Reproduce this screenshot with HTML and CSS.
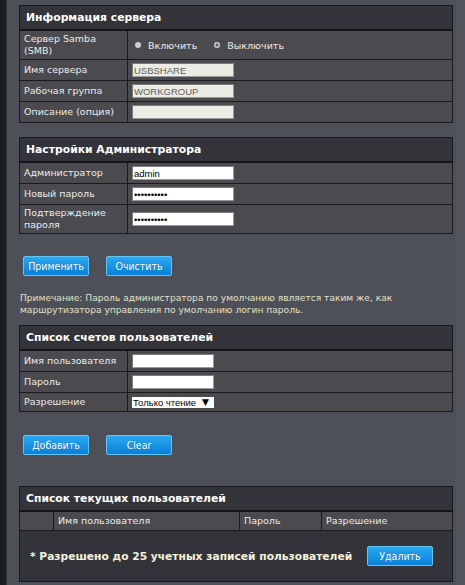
FILE: index.html
```html
<!DOCTYPE html>
<html lang="ru">
<head>
<meta charset="utf-8">
<title>Samba</title>
<link rel="stylesheet" href="styles.css">
</head>
<body>
<div class="page">
  <div class="edge-left"></div>
  <main class="content">
    <table class="panel">
      <colgroup><col class="col-label"><col></colgroup>
      <tr><th colspan="2" class="panel-title">Информация сервера</th></tr>
      <tr>
        <td class="label two">Сервер Samba (SMB)</td>
        <td class="value">
          <span class="radios">
            <label class="radio"><span class="dot"></span>Включить</label>
            <label class="radio"><span class="dot on"></span>Выключить</label>
          </span>
        </td>
      </tr>
      <tr><td class="label">Имя сервера</td><td class="value"><input class="field disabled" type="text" value="USBSHARE" disabled></td></tr>
      <tr><td class="label">Рабочая группа</td><td class="value"><input class="field disabled" type="text" value="WORKGROUP" disabled></td></tr>
      <tr><td class="label">Описание (опция)</td><td class="value"><input class="field disabled" type="text" value="" disabled></td></tr>
    </table>

    <table class="panel gap-top">
      <colgroup><col class="col-label"><col></colgroup>
      <tr><th colspan="2" class="panel-title">Настройки Администратора</th></tr>
      <tr><td class="label">Администратор</td><td class="value"><input class="field" type="text" value="admin"></td></tr>
      <tr><td class="label">Новый пароль</td><td class="value"><input class="field" type="password" value="1234567890"></td></tr>
      <tr><td class="label two">Подтверждение пароля</td><td class="value"><input class="field" type="password" value="1234567890"></td></tr>
    </table>

    <div class="actions">
      <button class="btn" type="button">Применить</button>
      <button class="btn" type="button">Очистить</button>
    </div>

    <p class="note">Примечание: Пароль администратора по умолчанию является таким же, как маршрутизатора управления по умолчанию логин пароль.</p>

    <table class="panel">
      <colgroup><col class="col-label"><col></colgroup>
      <tr><th colspan="2" class="panel-title">Список счетов пользователей</th></tr>
      <tr><td class="label">Имя пользователя</td><td class="value"><input class="field short" type="text" value=""></td></tr>
      <tr><td class="label">Пароль</td><td class="value"><input class="field short" type="password" value=""></td></tr>
      <tr><td class="label tight">Разрешение</td><td class="value"><div class="select"><span>Только чтение</span><span class="arrow">▼</span></div></td></tr>
    </table>

    <div class="actions actions-2">
      <button class="btn" type="button">Добавить</button>
      <button class="btn" type="button">Clear</button>
    </div>

    <table class="panel users">
      <colgroup><col class="c1"><col class="c2"><col class="c3"><col></colgroup>
      <tr><th colspan="4" class="panel-title">Список текущих пользователей</th></tr>
      <tr class="colhead"><td></td><td>Имя пользователя</td><td>Пароль</td><td>Разрешение</td></tr>
      <tr>
        <td colspan="4" class="users-body">
          <div class="users-row">
            <span class="limit">* Разрешено до 25 учетных записей пользователей</span>
            <button class="btn" type="button">Удалить</button>
          </div>
        </td>
      </tr>
    </table>
  </main>
  <div class="edge-right"></div>
</div>
</body>
</html>
```

FILE: styles.css
```css
html, body {
  margin: 0;
  padding: 0;
}

body {
  background: #4d5058;
  font-family: "DejaVu Sans", sans-serif;
  color: #ececec;
}

.page {
  display: flex;
  min-height: 585px;
}

.edge-left {
  flex: none;
  width: 7px;
  background: linear-gradient(to right, #1c1d20 0, #1c1d20 5px, #34363b 7px);
}

.edge-right {
  flex: none;
  width: 8px;
  background: #53565e;
  border-left: 1px solid #5a5d65;
  box-sizing: border-box;
}

.content {
  flex: 1;
  padding: 5px 4px 0 12px;
  min-width: 0;
}

.panel {
  width: 100%;
  border-collapse: collapse;
  table-layout: fixed;
  border: 1px solid #1a1a1c;
}

.panel td,
.panel th {
  border: 1px solid #1a1a1c;
}

.col-label {
  width: 108px;
}

.gap-top {
  margin-top: 14px;
}

.panel-title {
  background: #333439;
  color: #ffffff;
  font-weight: bold;
  font-size: 10.8px;
  line-height: 14px;
  text-align: left;
  padding: 5px 6px 4px;
  border-bottom: 2px solid #151517 !important;
}

.label {
  background: #4a4a4f;
  font-size: 9.5px;
  line-height: 12px;
  padding: 4px 4px;
  color: #ececec;
}

.label.two {
  padding: 2px 4px;
}

.label.tight {
  padding: 3px 4px;
}

.value {
  background: #4a4a4f;
  padding: 0 4px;
  vertical-align: middle;
  font-size: 9.5px;
}

.radios {
  display: flex;
  align-items: center;
  padding-left: 3px;
}

.radio {
  display: inline-flex;
  align-items: center;
  gap: 7px;
  margin-right: 17px;
  color: #ececec;
  font-size: 9.5px;
}

.dot {
  width: 6px;
  height: 6px;
  border-radius: 50%;
  background: #cfcfcf;
}

.dot.on {
  background: radial-gradient(circle, #6a6a6a 0 1.4px, #d0d0d0 1.8px);
}

.field {
  display: block;
  box-sizing: border-box;
  width: 102px;
  height: 14px;
  margin: 0;
  padding: 0 1px;
  border: 1px solid #9a9a9a;
  border-top-color: #7c7c7c;
  border-left-color: #7c7c7c;
  background: #ffffff;
  color: #000000;
  font-family: "Liberation Sans", Arial, sans-serif;
  font-size: 9.5px;
  outline: none;
}

.field.disabled {
  background: #ecebe4;
  color: #5e5e5e;
  -webkit-text-fill-color: #5e5e5e;
  opacity: 1;
}

.field.short {
  width: 82px;
  height: 14px;
}

.select {
  box-sizing: border-box;
  width: 82px;
  height: 11px;
  background: #ffffff;
  color: #000000;
  display: flex;
  align-items: center;
  justify-content: space-between;
  padding: 0 5px 0 1px;
  font-family: "Liberation Sans", Arial, sans-serif;
  font-size: 9.5px;
  line-height: 11px;
}

.arrow {
  font-family: "DejaVu Sans", sans-serif;
  font-size: 9px;
}

.actions {
  display: flex;
  gap: 17px;
  padding-left: 4px;
  margin-top: 22px;
}

.actions-2 {
  margin-top: 23px;
  margin-bottom: 31px;
}

.btn {
  box-sizing: border-box;
  width: 66px;
  height: 20px;
  padding: 0;
  border: 1px solid #63c4f4;
  border-radius: 2px;
  background: linear-gradient(#2aa9f1, #0a7fd7);
  color: #ffffff;
  font-family: "DejaVu Sans Condensed", "DejaVu Sans", sans-serif;
  font-stretch: condensed;
  font-size: 10.5px;
  text-shadow: 0 0 1px rgba(0, 40, 90, 0.4);
}

.note {
  margin: 16px 0 9px 1px;
  color: #e3e0c8;
  font-size: 9.1px;
  line-height: 12px;
}

.users .c1 { width: 34px; }
.users .c2 { width: 186px; }
.users .c3 { width: 82px; }

.colhead td {
  background: #4a4a4f;
  font-size: 9.5px;
  line-height: 12px;
  padding: 3px 4px;
  color: #ececec;
}

.users-body {
  background: #333439;
  padding: 0;
}

.users-row {
  height: 50px;
  display: flex;
  align-items: center;
  justify-content: space-between;
  padding: 0 19px 0 10px;
}

.limit {
  color: #f4f1dc;
  font-weight: bold;
  font-size: 10.7px;
}
```
